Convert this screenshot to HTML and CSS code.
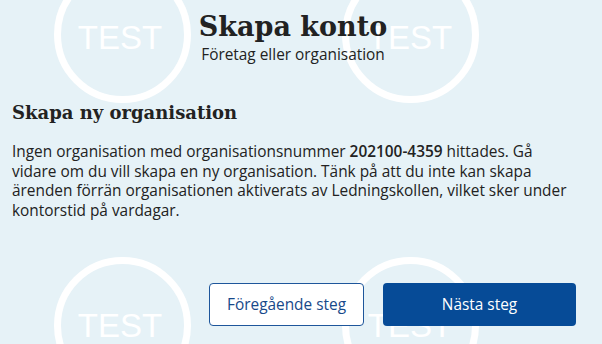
FILE: index.html
```html
<!DOCTYPE html>
<html lang="sv">
<head>
    <meta charset="UTF-8">
    <meta name="viewport" content="width=device-width, initial-scale=1.0">
    <title>Skapa konto</title>
    <link rel="stylesheet" href="styles.css">
</head>
<body>
    <!-- Testmiljö vattenstämpel -->
    <svg class="watermark" width="602" height="344" viewBox="0 0 602 344" aria-hidden="true">
        <g fill="none" stroke="#fff" stroke-width="7">
            <circle cx="122.5" cy="34.5" r="65"/>
            <circle cx="410.5" cy="34.5" r="65"/>
            <circle cx="122.5" cy="325.5" r="65"/>
            <circle cx="410.5" cy="325.5" r="65"/>
        </g>
        <g class="watermark-text" fill="#fff" text-anchor="middle">
            <text x="120" y="49">TEST</text>
            <text x="410" y="49">TEST</text>
            <text x="120" y="337">TEST</text>
            <text x="410" y="337">TEST</text>
        </g>
    </svg>

    <main class="page">
        <header class="page-head">
            <h1>Skapa konto</h1>
            <p>Företag eller organisation</p>
        </header>

        <section class="step">
            <h2>Skapa ny organisation</h2>
            <p>
                Ingen organisation med organisationsnummer <strong>202100-4359</strong> hittades.
                Gå vidare om du vill skapa en ny organisation. Tänk på att du inte kan skapa
                ärenden förrän organisationen aktiverats av Ledningskollen, vilket sker under
                kontorstid på vardagar.
            </p>
        </section>

        <div class="actions">
            <button class="btn btn-secondary">Föregående steg</button>
            <button class="btn btn-primary">Nästa steg</button>
        </div>
    </main>
</body>
</html>
```

FILE: styles.css
```css
* {
    box-sizing: border-box;
    margin: 0;
    padding: 0;
}

body {
    font-family: "Open Sans", "Noto Sans", Arial, sans-serif;
    background-color: #e6f2f7;
    color: #222;
    width: 602px;
    height: 344px;
    overflow: hidden;
    position: relative;
}

.watermark {
    position: absolute;
    top: 0;
    left: 0;
}

.watermark-text {
    font-family: "Liberation Sans", Arial, sans-serif;
    font-size: 33px;
}

.page {
    position: relative;
    padding: 11px 26px 0 12px;
}

.page-head {
    text-align: center;
    padding-right: 2px;
}

h1 {
    font-family: "Roboto Slab", "DejaVu Serif", serif;
    font-size: 27px;
    line-height: 32px;
    font-weight: bold;
    color: #222;
}

.page-head p {
    font-size: 15.4px;
    line-height: 20px;
    margin-top: 2px;
}

.step {
    margin-top: 36px;
}

h2 {
    font-family: "Roboto Slab", "DejaVu Serif", serif;
    font-size: 18px;
    line-height: 24px;
    font-weight: bold;
    color: #222;
}

.step p {
    max-width: 560px;
    font-size: 15.4px;
    line-height: 19.5px;
    margin-top: 17px;
}

.step strong {
    font-weight: 600;
}

.actions {
    display: flex;
    justify-content: flex-end;
    gap: 19px;
    margin-top: 63px;
}

.btn {
    height: 43px;
    font-family: "Open Sans", "Noto Sans", Arial, sans-serif;
    font-size: 15.4px;
    border-radius: 4px;
    cursor: pointer;
}

.btn-secondary {
    width: 155px;
    background-color: #fff;
    color: #17498a;
    border: 1px solid #1e569b;
}

.btn-primary {
    width: 193px;
    background-color: #064b97;
    color: #fff;
    border: none;
}

.btn:hover {
    filter: brightness(0.95);
}
```
